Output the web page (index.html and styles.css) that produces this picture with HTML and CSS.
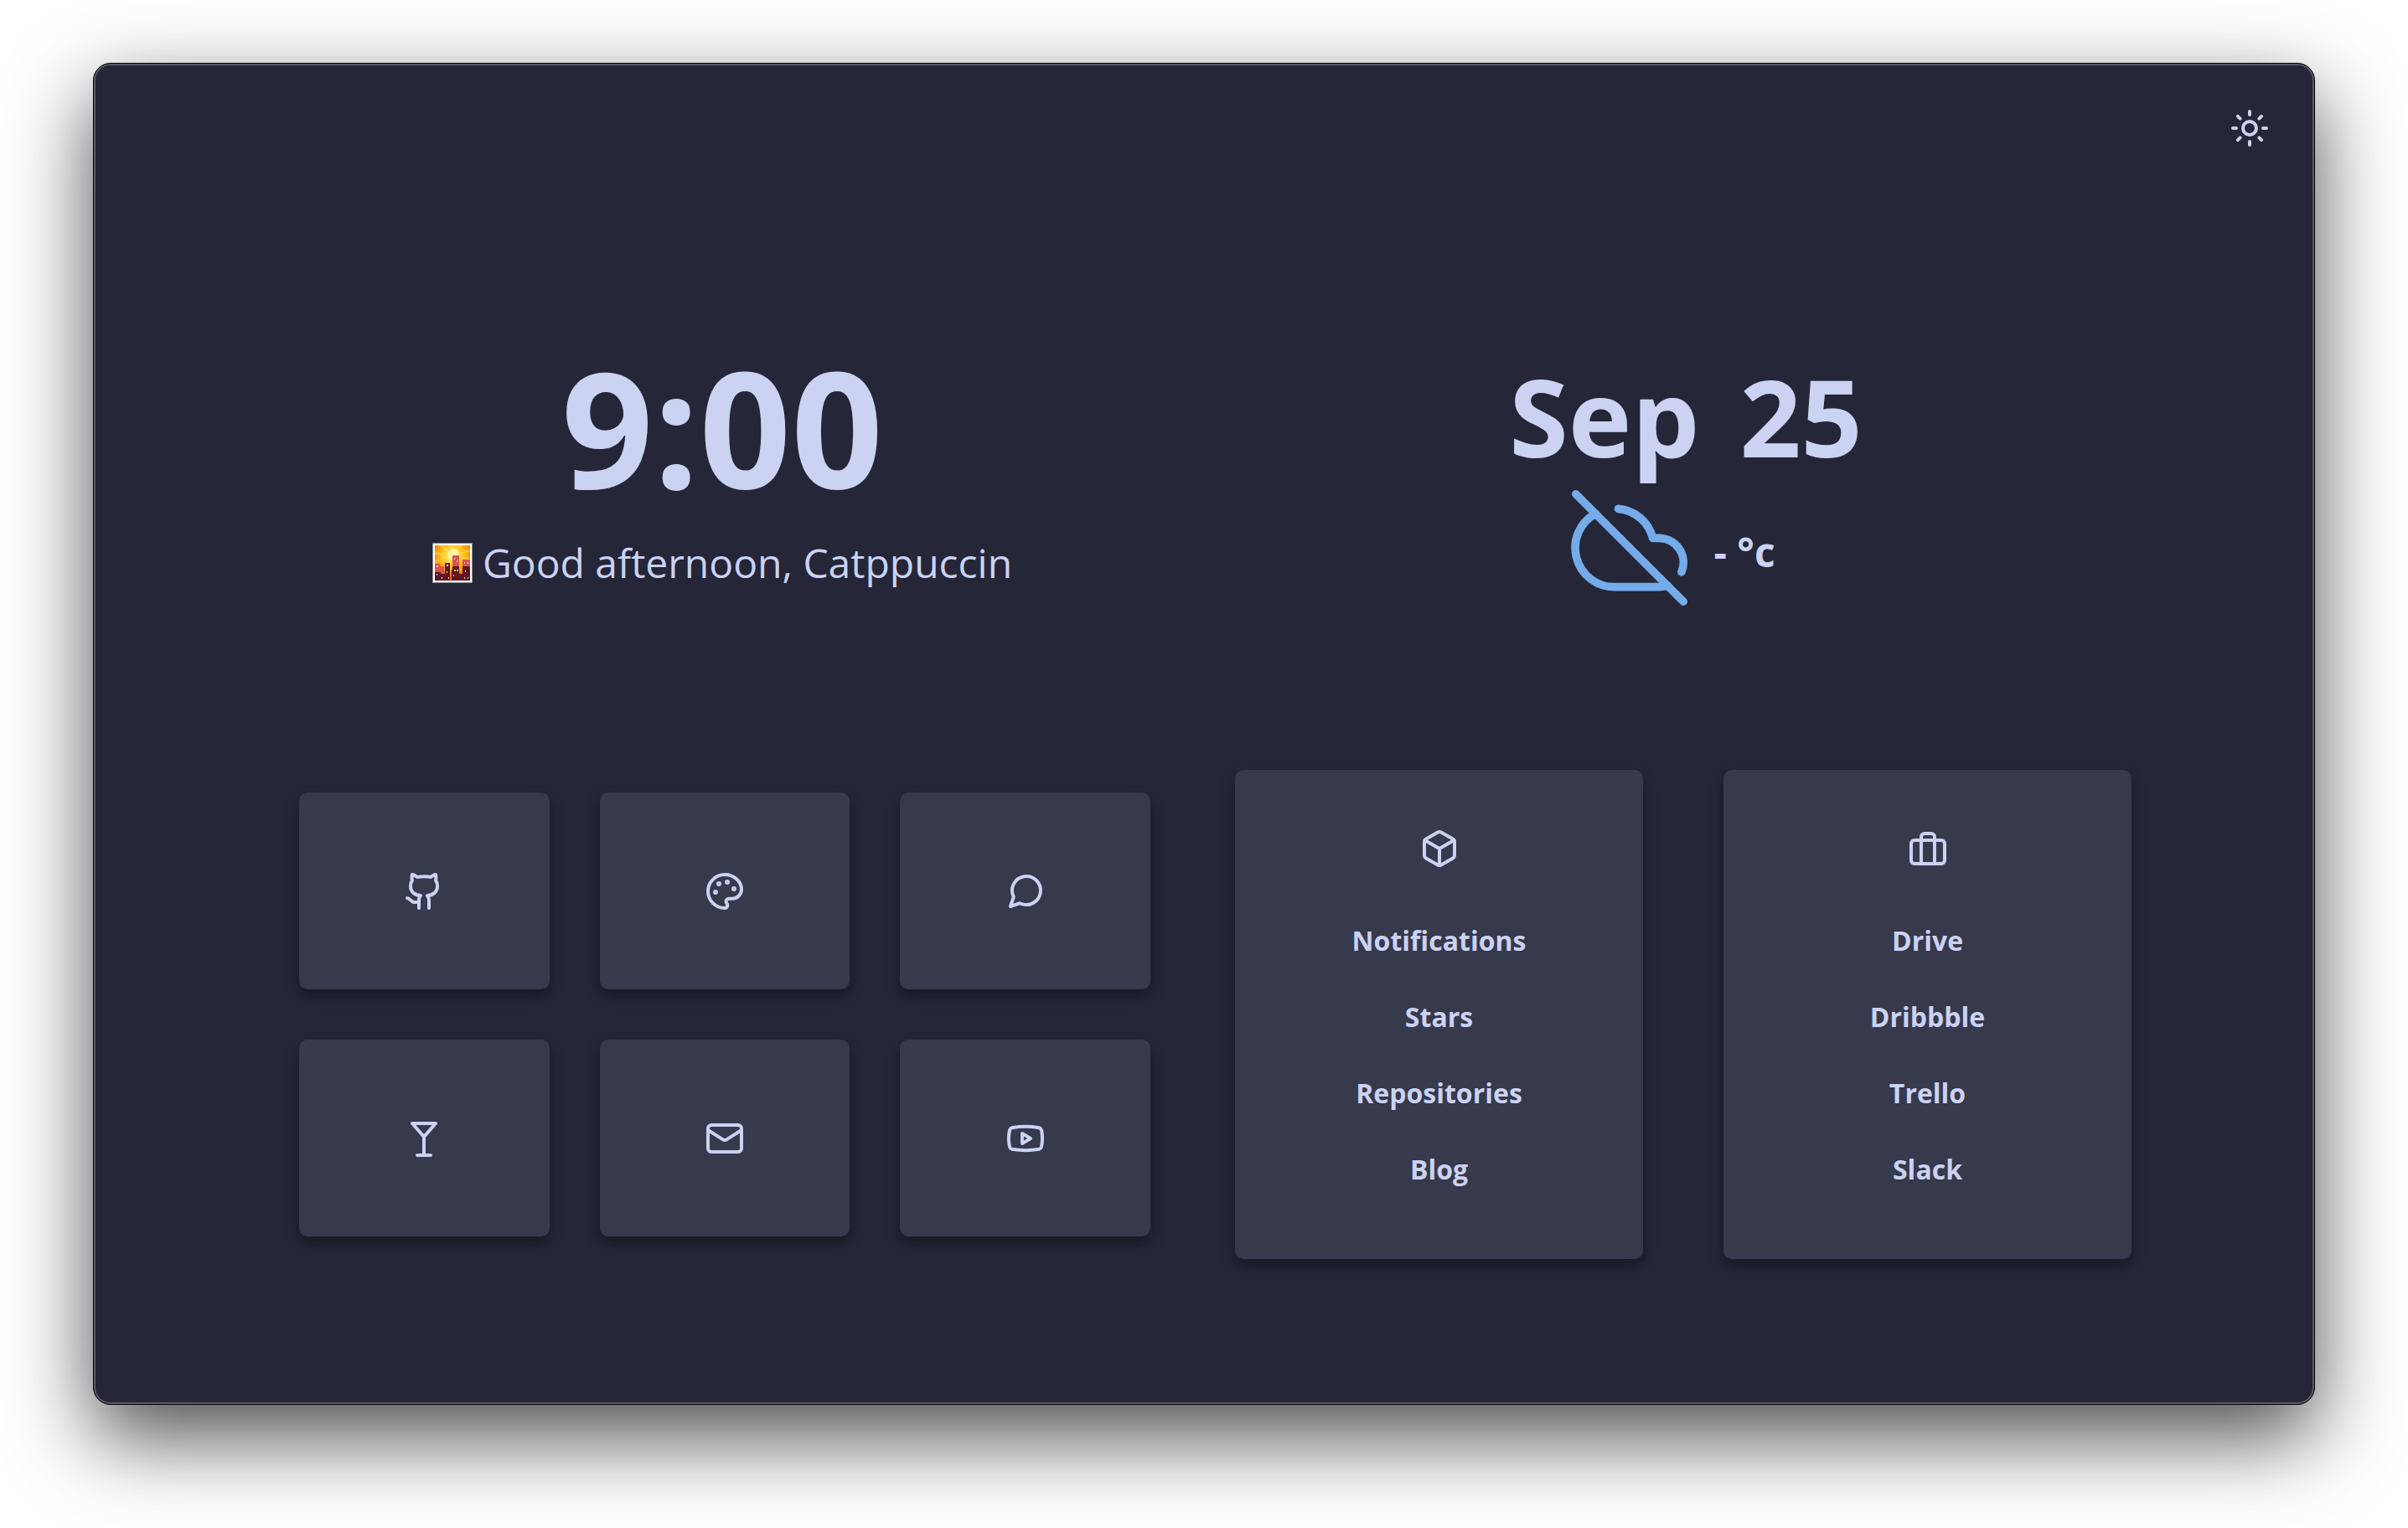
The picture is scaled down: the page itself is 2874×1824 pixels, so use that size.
FILE: index.html
```html
<!DOCTYPE html>
<html lang="en">
<head>
  <meta charset="utf-8">
  <title>Startpage</title>
  <meta name="viewport" content="width=device-width, initial-scale=1">
  <link rel="stylesheet" href="styles.css">
</head>
<body>
  <div class="window">
    <header class="toolbar">
      <button class="theme-toggle" type="button" aria-label="Toggle theme">
        <svg class="icon" viewBox="0 0 24 24"><circle cx="12" cy="12" r="4"/><path d="M12 2v2M12 20v2M4.93 4.93l1.41 1.41M17.66 17.66l1.41 1.41M2 12h2M20 12h2M6.34 17.66l-1.41 1.41M19.07 4.93l-1.41 1.41"/></svg>
      </button>
    </header>

    <main class="dashboard">
      <section class="clock-block">
        <h1 class="clock">9:00</h1>
        <p class="greeting">
          <svg class="greeting-icon" viewBox="0 0 48 48" aria-hidden="true">
            <defs>
              <radialGradient id="sky" cx="24" cy="15" r="28" gradientUnits="userSpaceOnUse">
                <stop offset="0" stop-color="#fff6b0"/>
                <stop offset="0.3" stop-color="#ffd83a"/>
                <stop offset="0.65" stop-color="#ffa512"/>
                <stop offset="1" stop-color="#f4520a"/>
              </radialGradient>
            </defs>
            <rect width="48" height="48" fill="#8a8f8c"/>
            <rect x="1" y="1" width="46" height="46" fill="#fff"/>
            <rect x="3" y="3" width="42" height="42" fill="url(#sky)"/>
            <path fill="#ffe95a" opacity="0.35" d="M24 14L8 3h4zM24 14L20 3h4zM24 14L32 3h4zM24 14L45 7v4zM24 14L45 18v4zM24 14L3 10v4zM24 14L3 21v4zM24 14L10 32h5z"/>
            <circle cx="25" cy="14" r="7" fill="#fff3a0"/>
            <path fill="#e0504e" d="M3 25h6v3h5v17H3zM24 15h8v30h-8zM36 20h9v25h-9z"/>
            <path fill="#5e1625" d="M3 35h7v2h5V24h6v21H3zM23 32h1v-4h8v9h4v-9h9v17H23z"/>
            <path fill="#ffd23f" d="M26 32h2v2h-2zM29 32h2v2h-2zM17 34h1v2h-1zM25 38h1v2h-1zM39 33h1v2h-1zM42 41h1v2h-1z"/>
            <path fill="#ffd9d9" d="M5 27h2v2H5zM26 18h1v2h-1zM29 21h1v2h-1zM38 23h1v2h-1zM42 23h1v2h-1zM17 26h2v2h-2zM5 37h1v2H5zM11 41h1v2h-1zM19 41h1v2h-1zM38 41h1v2h-1z"/>
          </svg>
          Good afternoon, Catppuccin
        </p>
      </section>

      <section class="date-block">
        <h2 class="date"><span>Sep</span><span>25</span></h2>
        <div class="weather">
          <svg class="weather-icon" viewBox="0 0 24 24" aria-hidden="true"><path d="M22.61 16.95A5 5 0 0 0 18 10h-1.26a8 8 0 0 0-7.05-6M5 5a8 8 0 0 0 4 15h9a5 5 0 0 0 1.7-.3"/><path d="M1 1l22 22"/></svg>
          <p class="temperature">- °c</p>
        </div>
      </section>

      <nav class="shortcuts" aria-label="Shortcuts">
        <a class="card shortcut" href="#github" aria-label="GitHub">
          <svg class="icon" viewBox="0 0 24 24"><path d="M15 22v-4a4.8 4.8 0 0 0-1-3.5c3 0 6-2 6-5.5.08-1.25-.27-2.48-1-3.5.28-1.15.28-2.35 0-3.5 0 0-1 0-3 1.5-2.64-.5-5.36-.5-8 0C6 2 5 2 5 2c-.3 1.15-.3 2.35 0 3.5A5.403 5.403 0 0 0 4 9c0 3.5 3 5.5 6 5.5-.39.49-.68 1.05-.85 1.65-.17.6-.22 1.23-.15 1.85v4"/><path d="M9 18c-4.51 2-5-2-7-2"/></svg>
        </a>
        <a class="card shortcut" href="#design" aria-label="Design">
          <svg class="icon" viewBox="0 0 24 24"><g fill="currentColor"><circle cx="13.5" cy="6.5" r=".5"/><circle cx="17.5" cy="10.5" r=".5"/><circle cx="8.5" cy="7.5" r=".5"/><circle cx="6.5" cy="12.5" r=".5"/></g><path d="M12 2C6.5 2 2 6.5 2 12s4.5 10 10 10c.926 0 1.648-.746 1.648-1.688 0-.437-.18-.835-.437-1.125-.29-.289-.438-.652-.438-1.125a1.64 1.64 0 0 1 1.668-1.668h1.996c3.051 0 5.555-2.503 5.555-5.554C21.965 6.012 17.461 2 12 2z"/></svg>
        </a>
        <a class="card shortcut" href="#chat" aria-label="Chat">
          <svg class="icon" viewBox="0 0 24 24"><path d="m3 21 1.9-5.7a8.5 8.5 0 1 1 3.8 3.8z"/></svg>
        </a>
        <a class="card shortcut" href="#lounge" aria-label="Lounge">
          <svg class="icon" viewBox="0 0 24 24"><path d="M8 22h8M12 11v11M19 3l-7 8-7-8Z"/></svg>
        </a>
        <a class="card shortcut" href="#mail" aria-label="Mail">
          <svg class="icon" viewBox="0 0 24 24"><rect width="20" height="16" x="2" y="4" rx="2"/><path d="m22 7-8.97 5.7a1.94 1.94 0 0 1-2.06 0L2 7"/></svg>
        </a>
        <a class="card shortcut" href="#youtube" aria-label="YouTube">
          <svg class="icon" viewBox="0 0 24 24"><path d="M2.5 17a24.12 24.12 0 0 1 0-10 2 2 0 0 1 1.4-1.4 49.56 49.56 0 0 1 16.2 0A2 2 0 0 1 21.5 7a24.12 24.12 0 0 1 0 10 2 2 0 0 1-1.4 1.4 49.55 49.55 0 0 1-16.2 0A2 2 0 0 1 2.5 17"/><path d="m10 15 5-3-5-3z"/></svg>
        </a>
      </nav>

      <div class="lists">
        <nav class="card list" aria-label="Projects">
          <svg class="icon" viewBox="0 0 24 24"><path d="M21 8a2 2 0 0 0-1-1.73l-7-4a2 2 0 0 0-2 0l-7 4A2 2 0 0 0 3 8v8a2 2 0 0 0 1 1.73l7 4a2 2 0 0 0 2 0l7-4A2 2 0 0 0 21 16Z"/><path d="m3.3 7 8.7 5 8.7-5M12 22V12"/></svg>
          <div class="links">
            <a class="link" href="#notifications">Notifications</a>
            <a class="link" href="#stars">Stars</a>
            <a class="link" href="#repositories">Repositories</a>
            <a class="link" href="#blog">Blog</a>
          </div>
        </nav>
        <nav class="card list" aria-label="Work">
          <svg class="icon" viewBox="0 0 24 24"><rect width="20" height="14" x="2" y="7" rx="2"/><path d="M16 21V5a2 2 0 0 0-2-2h-4a2 2 0 0 0-2 2v16"/></svg>
          <div class="links">
            <a class="link" href="#drive">Drive</a>
            <a class="link" href="#dribbble">Dribbble</a>
            <a class="link" href="#trello">Trello</a>
            <a class="link" href="#slack">Slack</a>
          </div>
        </nav>
      </div>
    </main>
  </div>
</body>
</html>
```
FILE: styles.css
```css
:root {
  --base: #252637;
  --surface: #37394c;
  --text: #cbd2f2;
  --blue: #74abe9;
  --edge: #5a5b69;
}

* {
  box-sizing: border-box;
  margin: 0;
  padding: 0;
}

body {
  display: flex;
  min-height: 100vh;
  padding: 75px 111px 147px;
  background: #fff;
  color: var(--text);
  font-family: "Open Sans", "Noto Sans", sans-serif;
  font-size: 32px;
}

.window {
  flex: 1;
  display: flex;
  flex-direction: column;
  border: 1px solid #000;
  border-radius: 21px;
  background: var(--base);
  box-shadow: inset 0 0 0 2px var(--edge), 0 38px 100px rgba(0, 0, 0, 0.7);
}

.toolbar {
  display: flex;
  justify-content: flex-end;
  padding: 53px 53px 0;
}

.theme-toggle {
  display: flex;
  border: 0;
  background: none;
  color: inherit;
  cursor: pointer;
}

.icon {
  display: block;
  width: 48px;
  height: 48px;
  fill: none;
  stroke: currentColor;
  stroke-width: 2;
  stroke-linecap: round;
  stroke-linejoin: round;
}

.dashboard {
  flex: 1;
  display: grid;
  grid-template-columns: 1016fr 1070fr;
  align-content: center;
  gap: 195px 101px;
  padding: 63px 218px 0 245px;
}

.clock-block,
.date-block {
  display: flex;
  flex-direction: column;
  align-items: center;
}

.clock-block {
  gap: 35px;
  padding-right: 6px;
}

.clock {
  font-size: 192px;
  line-height: 192px;
  font-weight: 700;
}

.greeting {
  display: flex;
  align-items: center;
  gap: 12px;
  font-size: 48px;
  line-height: 64px;
}

.greeting-icon {
  width: 48px;
  height: 48px;
}

.date-block {
  gap: 23px;
  padding: 20px 0 0 6px;
}

.date {
  display: flex;
  gap: 48px;
  font-size: 128px;
  line-height: 128px;
  font-weight: 700;
}

.weather {
  display: flex;
  align-items: center;
  gap: 30px;
  padding-right: 30px;
}

.weather-icon {
  width: 140px;
  height: 140px;
  fill: none;
  stroke: var(--blue);
  stroke-width: 1.66;
  stroke-linecap: round;
  stroke-linejoin: round;
}

.temperature {
  padding-top: 10px;
  font-size: 48px;
  line-height: 64px;
  font-weight: 700;
}

.card {
  border-radius: 10px;
  background: var(--surface);
  color: inherit;
  text-decoration: none;
  box-shadow: 0 8px 16px rgba(0, 0, 0, 0.35);
}

.shortcuts {
  display: grid;
  grid-template-columns: repeat(3, 1fr);
  align-content: center;
  gap: 60px;
}

.shortcut {
  display: flex;
  align-items: center;
  justify-content: center;
  min-height: 235px;
}

.lists {
  display: grid;
  grid-template-columns: repeat(2, 1fr);
  gap: 96px;
}

.list {
  display: flex;
  flex-direction: column;
  align-items: center;
  gap: 40px;
  padding: 70px 24px 62px;
}

.links {
  display: flex;
  flex-direction: column;
  align-items: center;
}

.link {
  padding: 24px;
  color: inherit;
  font-weight: 700;
  line-height: 43px;
  text-decoration: none;
}
```
